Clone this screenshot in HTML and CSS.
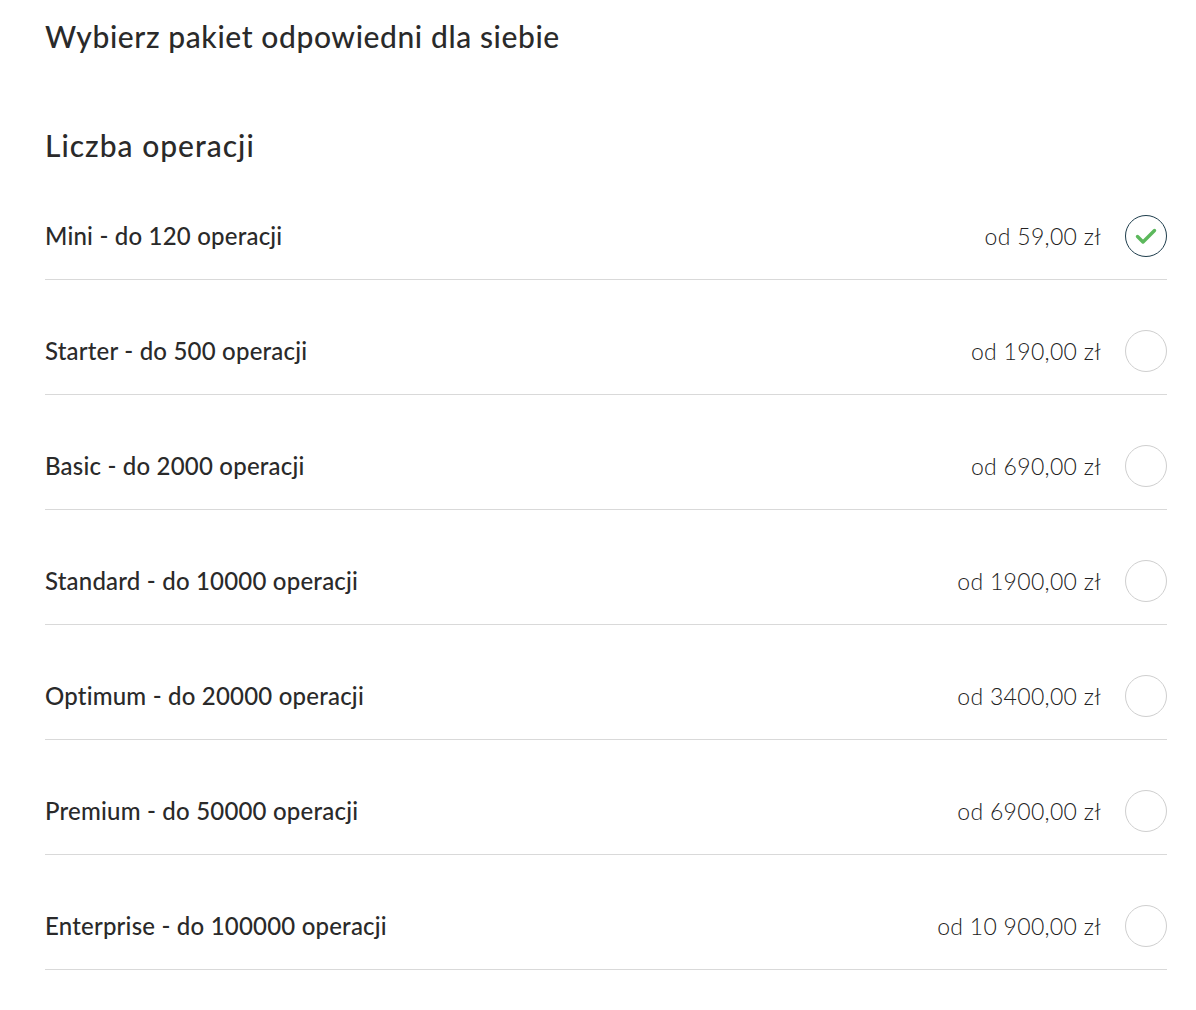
FILE: index.html
```html
<!DOCTYPE html>
<html lang="pl">
<head>
<meta charset="utf-8">
<title>Pakiety</title>
<link rel="stylesheet" href="styles.css">
</head>
<body>
<main class="page">
  <h1 class="title">Wybierz pakiet odpowiedni dla siebie</h1>
  <h2 class="subtitle">Liczba operacji</h2>
  <ul class="plans">
    <li class="plan">
      <span class="plan-name">Mini - do 120 operacji</span>
      <span class="plan-price">od 59,00 zł</span>
      <span class="radio radio-checked">
        <svg viewBox="0 0 24 24" width="24" height="24"><path d="M3.5 12.5l5.5 5.5L20.5 6.5" fill="none" stroke="#5cb85c" stroke-width="3.4" stroke-linecap="round" stroke-linejoin="round"/></svg>
      </span>
    </li>
    <li class="plan">
      <span class="plan-name">Starter - do 500 operacji</span>
      <span class="plan-price">od 190,00 zł</span>
      <span class="radio"></span>
    </li>
    <li class="plan">
      <span class="plan-name">Basic - do 2000 operacji</span>
      <span class="plan-price">od 690,00 zł</span>
      <span class="radio"></span>
    </li>
    <li class="plan">
      <span class="plan-name">Standard - do 10000 operacji</span>
      <span class="plan-price">od 1900,00 zł</span>
      <span class="radio"></span>
    </li>
    <li class="plan">
      <span class="plan-name">Optimum - do 20000 operacji</span>
      <span class="plan-price">od 3400,00 zł</span>
      <span class="radio"></span>
    </li>
    <li class="plan">
      <span class="plan-name">Premium - do 50000 operacji</span>
      <span class="plan-price">od 6900,00 zł</span>
      <span class="radio"></span>
    </li>
    <li class="plan">
      <span class="plan-name">Enterprise - do 100000 operacji</span>
      <span class="plan-price">od 10 900,00 zł</span>
      <span class="radio"></span>
    </li>
  </ul>
</main>
</body>
</html>
```

FILE: styles.css
```css
* { box-sizing: border-box; }
html, body { margin: 0; padding: 0; background: #ffffff; }
body {
  font-family: "Lato", "Noto Sans", sans-serif;
  color: #2a2a2a;
}
.page {
  padding: 16px 29px 0 45px;
}
.title {
  margin: 0;
  font-size: 30px;
  font-weight: 500;
  letter-spacing: 0.6px;
  line-height: 40px;
  color: #2a2a2a;
}
.subtitle {
  margin: 69px 0 0 0;
  font-size: 30px;
  font-weight: 500;
  letter-spacing: 1px;
  line-height: 40px;
  color: #2a2a2a;
}
.plans {
  list-style: none;
  margin: 0;
  padding: 0;
}
.plan {
  display: flex;
  align-items: center;
  padding: 50px 0 22px 0;
  border-bottom: 1px solid #d9d9d9;
}
.plan-name {
  flex: 1;
  font-size: 24px;
  font-weight: 500;
  letter-spacing: 0.2px;
  line-height: 30px;
  color: #2a2a2a;
}
.plan-price {
  font-size: 23px;
  font-weight: 300;
  letter-spacing: 0.3px;
  line-height: 30px;
  color: #222;
  margin-right: 24px;
}
.radio {
  width: 42px;
  height: 42px;
  border-radius: 50%;
  border: 1px solid #cfcfcf;
  display: flex;
  align-items: center;
  justify-content: center;
  flex: none;
}
.radio-checked {
  border: 1.5px solid #1e3d4c;
}
```
